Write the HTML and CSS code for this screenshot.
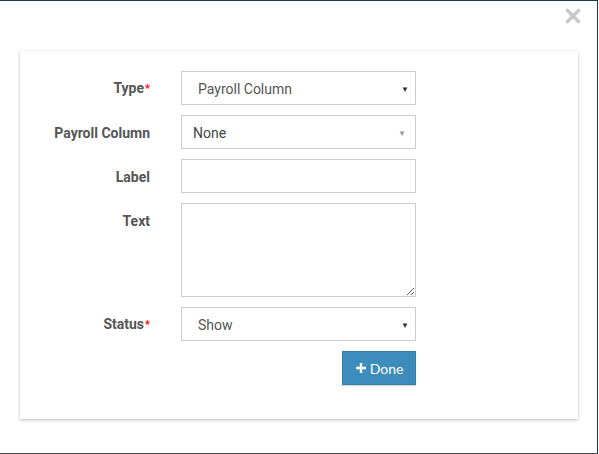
FILE: index.html
```html
<!DOCTYPE html>
<html>
<head>
<meta charset="utf-8">
<link rel="stylesheet" href="styles.css">
</head>
<body>
<div class="frame">
  <div class="topbar">
    <button class="close" aria-label="Close">
      <svg width="16" height="16" viewBox="0 0 16 16"><path d="M2.5 2.5 L13.5 13.5 M13.5 2.5 L2.5 13.5" stroke="#c9c9c9" stroke-width="3.6" stroke-linecap="round"/></svg>
    </button>
  </div>
  <div class="card">
    <form class="form">
      <label class="lbl">Type<span class="req">*</span></label>
      <div class="select native"><span>Payroll Column</span><span class="arrow">▼</span></div>

      <label class="lbl">Payroll Column</label>
      <div class="select s2"><span>None</span><span class="arrow light">▼</span></div>

      <label class="lbl">Label</label>
      <input class="input" type="text">

      <label class="lbl top">Text</label>
      <textarea class="textarea"></textarea>

      <label class="lbl">Status<span class="req">*</span></label>
      <div class="select native"><span>Show</span><span class="arrow">▼</span></div>

      <div></div>
      <div class="actions">
        <button type="button" class="btn"><svg width="12" height="12" viewBox="0 0 12 12"><path d="M6 1 V11 M1 6 H11" stroke="#fff" stroke-width="2.4"/></svg>Done</button>
      </div>
    </form>
  </div>
</div>
</body>
</html>
```

FILE: styles.css
```css
html, body {
  margin: 0;
  padding: 0;
  background: #fff;
}
.frame {
  box-sizing: border-box;
  width: 598px;
  height: 454px;
  border-top: 1px solid #173a55;
  border-right: 1px solid #173a55;
  border-bottom: 1px solid #4a4a4a;
  background: #fff;
  font-family: Roboto, "Liberation Sans", sans-serif;
}
.topbar {
  height: 50px;
  display: flex;
  justify-content: flex-end;
  align-items: flex-start;
}
.close {
  border: 0;
  background: none;
  padding: 0;
  margin: 7px 16px 0 0;
  width: 16px;
  height: 16px;
  display: block;
}
.close svg { display: block; }
.card {
  margin-left: 20px;
  width: 558px;
  height: 368px;
  box-sizing: border-box;
  background: #fff;
  box-shadow: 0 1px 3px rgba(0,0,0,0.28);
  padding-top: 20px;
}
.form {
  display: grid;
  grid-template-columns: 130px 235px;
  column-gap: 31px;
  row-gap: 10px;
  align-items: center;
}
.lbl {
  text-align: right;
  font-weight: 700;
  font-size: 14px;
  color: #555;
  line-height: 20px;
  padding-top: 2px;
}
.lbl.top {
  align-self: start;
  padding-top: 8px;
}
.req {
  color: #f00;
  font-size: 11px;
  margin-left: 1px;
  position: relative;
  top: -1px;
}
.select, .input, .textarea {
  box-sizing: border-box;
  width: 235px;
  border: 1px solid #ccc;
  background: #fff;
  font-family: Roboto, "Liberation Sans", sans-serif;
  font-size: 14px;
  color: #444;
}
.select {
  height: 34px;
  display: flex;
  align-items: center;
  justify-content: space-between;
  padding-top: 2px;
}
.select.native { padding-left: 16px; padding-right: 6px; color: #555; }
.select.s2 { padding-left: 11px; padding-right: 9px; color: #444; }
.arrow {
  font-size: 8px;
  color: #333;
}
.arrow.light { color: #999; font-size: 8px; }
.input {
  height: 34px;
  margin: 0;
  padding: 6px 12px;
  outline: none;
}
.textarea {
  height: 94px;
  margin: 0;
  padding: 6px 12px;
  resize: vertical;
  display: block;
  outline: none;
}
.actions {
  display: flex;
  justify-content: flex-end;
}
.btn {
  height: 34px;
  width: 74px;
  border: 1px solid #367fa9;
  background: #3c8dbc;
  color: #fff;
  font-family: Lato, "Open Sans", sans-serif;
  font-size: 14px;
  display: flex;
  align-items: center;
  justify-content: center;
  gap: 3px;
  padding: 0;
  box-shadow: 0 1px 1px rgba(0,0,0,0.15);
}
.btn svg { display: block; }
```
